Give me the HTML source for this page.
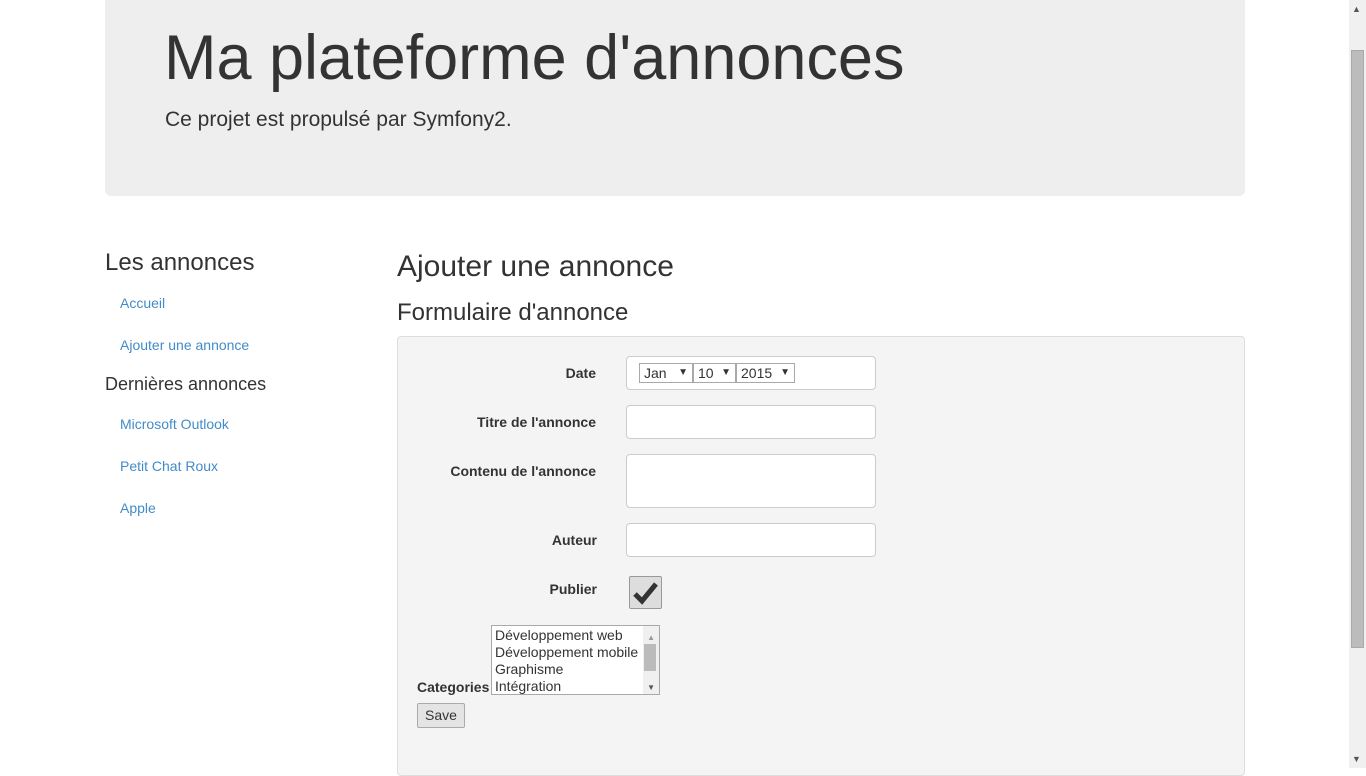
<!DOCTYPE html>
<html><head><meta charset="utf-8"><style>
*{box-sizing:border-box}
body{margin:0;width:1366px;height:768px;overflow:hidden;background:#fff;font-family:"Liberation Sans",Arial,sans-serif;color:#333;position:relative}
.a{position:absolute;white-space:nowrap}
.jumbo{position:absolute;left:105px;top:0;width:1140px;height:196px;background:#eee;border-radius:0 0 6px 6px}
.link{color:#428bca;font-size:14px}
.lbl{font-weight:bold;font-size:14px;text-align:right;width:200px}
.inp{position:absolute;left:626px;width:250px;background:#fff;border:1px solid #ccc;border-radius:4px}
.sel{position:absolute;top:363px;height:20px;border:1px solid #a9a9a9;background:#fff;font-size:14px;padding-left:4px;line-height:18px}
.sel span{position:absolute;right:4px;font-size:10px}
</style></head><body>
<div class="jumbo"></div>
<div class="a" style="left:164px;top:22px;font-size:63px;line-height:72px">Ma plateforme d'annonces</div>
<div class="a" style="left:165px;top:107px;font-size:21px;line-height:26px">Ce projet est propulsé par Symfony2.</div>

<div class="a" style="left:105px;top:249px;font-size:24px;line-height:28px">Les annonces</div>
<div class="a link" style="left:120px;top:295px">Accueil</div>
<div class="a link" style="left:120px;top:337px">Ajouter une annonce</div>
<div class="a" style="left:105px;top:373px;font-size:18px;line-height:22px">Dernières annonces</div>
<div class="a link" style="left:120px;top:416px">Microsoft Outlook</div>
<div class="a link" style="left:120px;top:458px">Petit Chat Roux</div>
<div class="a link" style="left:120px;top:500px">Apple</div>

<div class="a" style="left:397px;top:250px;font-size:30px;line-height:34px">Ajouter une annonce</div>
<div class="a" style="left:397px;top:299px;font-size:24px;line-height:28px">Formulaire d'annonce</div>

<div style="position:absolute;left:397px;top:336px;width:848px;height:440px;background:#f4f4f4;border:1px solid #ddd;border-radius:4px"></div>

<div class="a lbl" style="left:396px;top:365px">Date</div>
<div class="inp" style="top:356px;height:34px"></div>
<div class="sel" style="left:639px;width:54px">Jan<span>▼</span></div>
<div class="sel" style="left:693px;width:43px">10<span>▼</span></div>
<div class="sel" style="left:736px;width:59px">2015<span>▼</span></div>

<div class="a lbl" style="left:396px;top:414px">Titre de l'annonce</div>
<div class="inp" style="top:405px;height:34px"></div>
<div class="a lbl" style="left:396px;top:463px">Contenu de l'annonce</div>
<div class="inp" style="top:454px;height:54px"></div>
<div class="a lbl" style="left:397px;top:532px">Auteur</div>
<div class="inp" style="top:523px;height:34px"></div>
<div class="a lbl" style="left:397px;top:581px">Publier</div>
<div style="position:absolute;left:629px;top:576px;width:33px;height:33px;background:#ddd;border:1px solid #999;border-radius:2px">
<svg width="31" height="31" viewBox="0 0 31 31"><path d="M5 17 L12 24 L26 7" fill="none" stroke="#333" stroke-width="5" stroke-linejoin="miter"/></svg></div>

<div class="a" style="left:417px;top:679px;font-weight:bold;font-size:14px">Categories</div>
<div style="position:absolute;left:491px;top:625px;width:169px;height:70px;background:#fff;border:1px solid #a9a9a9;font-size:14px;line-height:17px;padding:1px 0 0 3px">
Développement web<br>Développement mobile<br>Graphisme<br>Intégration
<div style="position:absolute;right:0;top:0;width:16px;height:68px;background:#f0f0f0"></div>
<div style="position:absolute;right:3px;top:18px;width:12px;height:27px;background:#bbb"></div>
<div style="position:absolute;right:4px;top:3px;font-size:8px;color:#999">▲</div>
<div style="position:absolute;right:4px;top:53px;font-size:8px;color:#555">▼</div>
</div>
<div style="position:absolute;left:417px;top:703px;width:48px;height:25px;border:1px solid #aaa;background:#e4e4e4;border-radius:2px;font-size:14px;text-align:center;line-height:23px">Save</div>

<div style="position:absolute;left:1349px;top:0;width:17px;height:768px;background:#f0f0f0"></div>
<div style="position:absolute;left:1351px;top:50px;width:13px;height:598px;background:#bcbcbc;border:1px solid #aaa"></div>
<div class="a" style="left:1352px;top:4px;font-size:9px;color:#555">▲</div>
<div class="a" style="left:1352px;top:754px;font-size:9px;color:#555">▼</div>
</body></html>
